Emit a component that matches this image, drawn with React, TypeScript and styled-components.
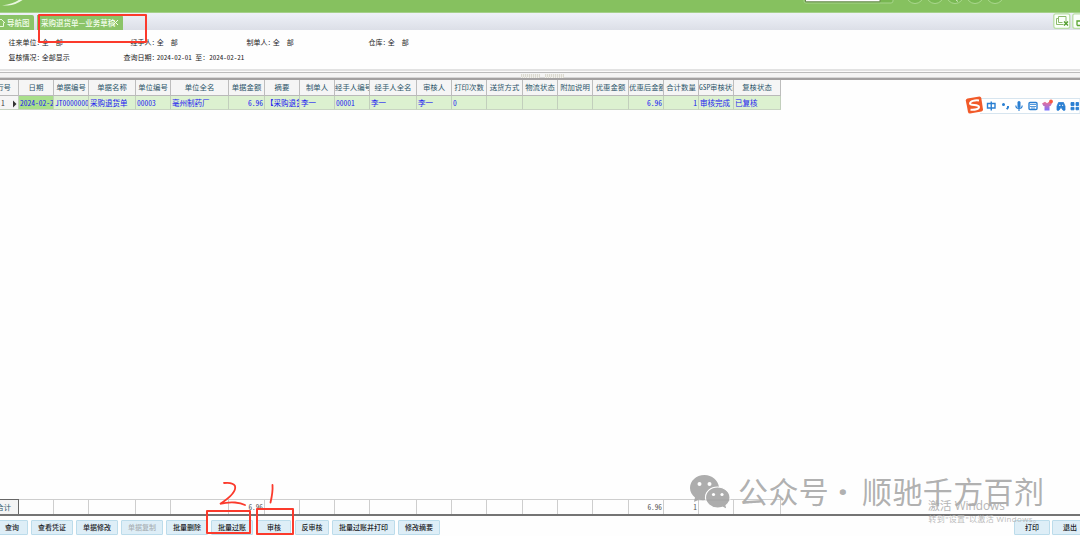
import React from "react";
import styled, { createGlobalStyle } from "styled-components";

const Global = createGlobalStyle`
  * { box-sizing: border-box; }
  body { margin: 0; background: #fff; overflow: hidden; }
`;

const Screen = styled.div`
  position: relative;
  width: 1080px;
  height: 536px;
  overflow: hidden;
  display: flex;
  flex-direction: column;
  background: #fefefe;
  font-family: "Noto Sans CJK SC", sans-serif;
  font-feature-settings: "hwid";
  font-size: 7px;
  color: #1c1c1c;
  white-space: pre;
`;

const TopBar = styled.header`
  flex: none;
  height: 13px;
  background: #86c15f;
  border-bottom: 1px solid #a5d08a;
  svg { display: block; }
`;

const TabStrip = styled.nav`
  flex: none;
  height: 17px;
  display: flex;
  align-items: flex-end;
  background: linear-gradient(#eef1f8, #dcdfe7);
`;

const Tab = styled.div<{ $w: number; $pad: number }>`
  width: ${(p) => p.$w}px;
  height: 15px;
  margin-right: 3px;
  padding-left: ${(p) => p.$pad}px;
  display: flex;
  align-items: center;
  background: #8bc468;
  border-radius: 0 2px 0 0;
  color: #f6fff0;
  font-size: 7.5px;
  line-height: 15px;
  overflow: hidden;
  font-weight: 500;
`;

const CloseIcon = styled.svg`
  flex: none;
  margin-left: -3px;
`;

const TabTools = styled.div`
  margin-left: auto;
  width: 27px;
  height: 16px;
  display: flex;
  align-self: flex-start;
  svg { flex: none; display: block; }
`;

const Filters = styled.section`
  flex: none;
  height: 39px;
  padding: 5px 0 0 8.5px;
  background: #fefefe;
`;

const FilterRow = styled.div`
  display: flex;
  height: 14.5px;
  line-height: 14.5px;
`;

const Field = styled.span<{ $w: number }>`
  width: ${(p) => p.$w}px;
  flex: none;
`;

const FieldLabel = styled.span`
  margin-right: -1.8px;
`;

const Splitter = styled.div`
  flex: none;
  height: 11px;
  border-top: 2px solid #e2e2e2;
  border-bottom: 2px solid #a3a1a1;
  background: linear-gradient(#fafafa 0 1px, #bcbcbc 1px 2px, #f5f5f5 2px 6px, #d6d6d6 6px);
  display: flex;
  justify-content: center;
  gap: 5px;
  padding: 3px 0 0 4px;
`;

const Grip = styled.i`
  width: 19px;
  height: 4px;
  background: repeating-linear-gradient(100deg, #dbd9d0 0 1px, #efefeb 1px 2px);
`;

const cols = [19, 35, 35, 47, 35, 58, 36, 35, 35, 35, 47, 35, 35, 36, 35, 35, 36, 35, 35, 35, 47];

const GridRow = styled.div<{ $h: number }>`
  flex: none;
  display: grid;
  grid-template-columns: ${cols.map((c) => c + "px").join(" ")};
  width: 781px;
  height: ${(p) => p.$h}px;
`;

const HeadCell = styled.div<{ $align: "center" | "flex-start" | "flex-end" }>`
  display: flex;
  justify-content: ${(p) => p.$align};
  padding-right: ${(p) => (p.$align === "flex-end" ? 7 : 0)}px;
  overflow: hidden;
  background: #f5f5f5;
  border-right: 1px solid #bdbdbd;
  border-bottom: 1px solid #b9b9b9;
  color: #2d566a;
  font-size: 7.4px;
  line-height: 14px;
  min-width: 0;
`;

const HeadText = styled.span`
  flex: none;
`;

const Cell = styled.div<{ $right?: boolean; $tone?: string; $ink?: string }>`
  overflow: hidden;
  min-width: 0;
  padding: 0 1px;
  text-align: ${(p) => (p.$right ? "right" : "left")};
  background: ${(p) => p.$tone || "#dcf1d0"};
  color: ${(p) => p.$ink || "#2020f0"};
  border-right: 1px solid #c2cfbc;
  border-bottom: 1px solid #c8d4c2;
  font-size: 7.5px;
  line-height: 13px;
  svg { margin-left: 7px; vertical-align: -1.5px; }
`;

const Body = styled.main`
  flex: 1;
`;

const TotalCell = styled.div<{ $label?: boolean }>`
  overflow: hidden;
  padding-right: ${(p) => (p.$label ? 7 : 1)}px;
  display: flex;
  justify-content: flex-end;
  background: ${(p) => (p.$label ? "#f4f4f4" : "#fefefe")};
  border: 0 solid ${(p) => (p.$label ? "#666" : "#cecece")};
  border-right-width: 1px;
  border-top-width: 1px;
  color: ${(p) => (p.$label ? "#2d566a" : "#555")};
  font-size: 7.3px;
  line-height: 15px;
`;

const Actions = styled.footer`
  flex: none;
  height: 22px;
  border-top: 2px solid #747474;
  display: flex;
  padding-top: 4px;
  margin: 0 -8px 0 -4px;
`;

const Button = styled.button<{ $w: number; $gap?: number; $off?: boolean }>`
  flex: none;
  width: ${(p) => p.$w}px;
  height: 15px;
  margin: 0 ${(p) => p.$gap ?? 3}px 0 0;
  padding: 0;
  border: 1px solid #bcdceb;
  border-radius: 1px;
  background: #deeef7;
  color: ${(p) => (p.$off ? "#a9b0b5" : "#1b2226")};
  font: 500 7px/13px "Noto Sans CJK SC", sans-serif;
  white-space: nowrap;
`;

const Spacer = styled.div`
  flex: 1;
`;

const Mark = styled.div<{ $x: number; $y: number; $w: number; $h: number }>`
  position: absolute;
  left: ${(p) => p.$x}px;
  top: ${(p) => p.$y}px;
  width: ${(p) => p.$w}px;
  height: ${(p) => p.$h}px;
  border: 2px solid #fb3a2c;
  border-radius: 1px;
`;

const Overlay = styled.svg<{ $x: number; $y: number }>`
  position: absolute;
  left: ${(p) => p.$x}px;
  top: ${(p) => p.$y}px;
`;

const Watermark = styled.div<{ $x: number; $y: number; $size: number; $ink: string; $track?: number; $weight?: number }>`
  position: absolute;
  left: ${(p) => p.$x}px;
  top: ${(p) => p.$y}px;
  font-size: ${(p) => p.$size}px;
  font-weight: ${(p) => p.$weight ?? 400};
  line-height: 1.2;
  letter-spacing: ${(p) => p.$track ?? 0}px;
  color: ${(p) => p.$ink};
  font-family: "Open Sans", "Noto Sans CJK SC", sans-serif;
  font-feature-settings: normal;
`;

const heads = ["行号", "日期", "单据编号", "单据名称", "单位编号", "单位全名", "单据金额", "摘要", "制单人", "经手人编号", "经手人全名", "审核人", "打印次数", "送货方式", "物流状态", "附加说明", "优惠金额", "优惠后金额", "合计数量", "GSP审核状态", "复核状态"];
const values = ["1", "2024-02-21", "JT0000000", "采购退货单", "00003", "亳州制药厂", "6.96", "【采购退货", "李一", "00001", "李一", "李一", "0", "", "", "", "", "6.96", "1", "审核完成", "已复核"];
const numeric = [6, 17, 18];
const wide = [9, 17, 19];

function Filter({ label, value, w }: { label: string; value: string; w: number }) {
  return (
    <Field $w={w}>
      <FieldLabel>{label}:</FieldLabel> {value}
    </Field>
  );
}

export default function App() {
  return (
    <Screen>
      <Global />
      <TopBar>
        <svg width="1080" height="12" viewBox="0 0 1080 12">
          <path d="M8 5.500Q16 5 24-1L20-1Q15 3.500 2 5.500Z" fill="#e8f6df" />
          <rect x="804" y="-8" width="89" height="11" rx="2" fill="#78b751" stroke="#a7d48c" />
          <path d="M805.5 0V1.8H880V0" fill="#fff" stroke="#69864f" strokeWidth="1" />
          {[915, 935, 955, 975, 995].map((x) => (
            <circle key={x} cx={x} cy="-5" r="8.5" fill="#79b953" stroke="#aad78e" />
          ))}
          <path d="M956 0l2 1.500" stroke="#d4edc4" />
        </svg>
      </TopBar>
      <TabStrip>
        <Tab $w={34} $pad={0}>
          <svg width="7" height="10" viewBox="0 0 7 10" fill="none" stroke="#f4ffec" strokeWidth=".9">
            <path d="M-3 5L1 1l4 4M3.5 4.5V8.5H-1" />
          </svg>
          导航图
        </Tab>
        <Tab $w={86} $pad={4}>
          采购退货单—业务草稿
          <CloseIcon width="7" height="9" viewBox="0 0 7 9" fill="none" stroke="#f4ffec">
            <path d="M1 2l5 5M6 2L1 7" />
          </CloseIcon>
        </Tab>
        <TabTools>
          <svg width="27" height="16" viewBox="0 0 27 16" fill="none">
            <rect x=".8" y=".8" width="16" height="14.5" rx="2" fill="#fafffa" stroke="#b9dea5" strokeWidth="1.3" />
            <rect x="19.8" y=".8" width="16" height="14.5" rx="2" fill="#fafffa" stroke="#b9dea5" strokeWidth="1.3" />
            <path d="M5.5 3.5h7.5v5.5M5.5 3.5v6h4M5.5 5.500H3.500v6h7" stroke="#8cba6c" />
            <path d="M11 8.500l4 4M15 8.500l-4 4" stroke="#4d9b28" strokeWidth="1.3" />
            <path d="M24 12.500V8H30M24 12.500h4" stroke="#5aa432" strokeWidth="1.3" />
          </svg>
        </TabTools>
      </TabStrip>
      <Filters>
        <FilterRow>
          <Filter w={122} label="往来单位" value="全  部" />
          <Filter w={116} label="经手人" value="全  部" />
          <Filter w={122} label="制单人" value="全  部" />
          <Filter w={80} label="仓库" value="全  部" />
        </FilterRow>
        <FilterRow>
          <Filter w={115} label="复核情况" value="全部显示" />
          <Filter w={140} label="查询日期" value="2024-02-01 至: 2024-02-21" />
        </FilterRow>
      </Filters>
      <Splitter><Grip /><Grip /></Splitter>
      <GridRow $h={16}>
        {heads.map((h, i) => (
          <HeadCell key={h} $align={i === 0 ? "flex-end" : wide.includes(i) ? "flex-start" : "center"}>
            <HeadText>{h}</HeadText>
          </HeadCell>
        ))}
      </GridRow>
      <GridRow $h={14}>
        {values.map((v, i) => (
          <Cell key={i} $right={numeric.includes(i)} $tone={i === 0 ? "#f5f5f5" : i === 1 ? "#a9df8b" : undefined} $ink={i === 0 ? "#444" : undefined}>
            {v}
            {i === 0 && (
              <svg width="5" height="8" viewBox="0 0 5 8">
                <path d="M1 0.5L4.5 4L1 7.5Z" fill="#333" />
              </svg>
            )}
          </Cell>
        ))}
      </GridRow>
      <Body />
      <GridRow $h={15}>
        {cols.map((_, i) => (
          <TotalCell key={i} $label={i === 0}>
            {i === 0 ? "合计" : i === 6 || i === 17 ? "6.96" : i === 18 ? "1" : ""}
          </TotalCell>
        ))}
      </GridRow>
      <Actions>
        <Button $w={32}>查询</Button>
        <Button $w={42}>查看凭证</Button>
        <Button $w={42}>单据修改</Button>
        <Button $w={42} $off>单据复制</Button>
        <Button $w={42}>批量删除</Button>
        <Button $w={42} $gap={4}>批量过账</Button>
        <Button $w={34} $gap={4}>审核</Button>
        <Button $w={34}>反审核</Button>
        <Button $w={63}>批量过账并打印</Button>
        <Button $w={42}>修改摘要</Button>
        <Spacer />
        <Button $w={36} $gap={2}>打印</Button>
        <Button $w={36} $gap={0}>退出</Button>
      </Actions>

      <Watermark $x={928} $y={498} $size={11.8} $ink="#b5b5b5">激活 Windows</Watermark>
      <Watermark $x={928.5} $y={513.5} $size={8} $ink="#bababa" $track={0.35}>转到"设置"以激活 Windows。</Watermark>
      <Watermark $x={738} $y={474} $size={30} $ink="#aaaaaaee" $track={0.4}>公众号</Watermark>
      <Watermark $x={838.5} $y={474} $size={30} $ink="#aaaaaaee" $weight={800}>·</Watermark>
      <Watermark $x={862} $y={474} $size={30} $ink="#aaaaaaee" $track={0.4}>顺驰千方百剂</Watermark>
      <Overlay $x={689} $y={474} width="42" height="36" viewBox="0 0 42 36">
        <path d="M15.500 1C7 1 1 7 1 14c0 4 2 7 5 9.500L5 28l5-2.500c2 .6 4 .8 6 .5C15 18 22 12 30 13 29 6 23 1 15.500 1Z" fill="#adadad" />
        <path d="M28.500 13C21.500 13 16.500 18 16.500 23.500S22 34 28.500 34c2 0 3.500-.2 5-.8L38 35.500 37 31.500c2.500-2 4-4.500 4-8C41 18 35.500 13 28.500 13Z" fill="#adadad" stroke="#fff" strokeWidth="1.100" />
        <g fill="#fff"><circle cx="10.500" cy="10" r="2" /><circle cx="20.500" cy="10" r="2" /><circle cx="24.500" cy="20.500" r="1.600" /><circle cx="33" cy="20.500" r="1.600" /></g>
        <path d="M5 26h36" stroke="#999" strokeWidth=".7" opacity=".55" />
      </Overlay>

      <Overlay $x={964} $y={95} width="116" height="20" viewBox="0 0 116 20" fill="none">
        <path d="M16 3.500H116V18.500H16" fill="#fff" stroke="#d7e5ef" />
        <path d="M3.500 3.500L15.500 1.500Q17 1.500 17.300 3L19 14.500Q19 16 17.500 16.500L6 18.500Q4.300 18.500 4 17L1.800 5.500Q1.800 4 3.500 3.500Z" fill="#f15a29" />
        <path d="M15 5.500C11 5 6 6 6 8.500c0 2.700 9 0 9 3.500 0 2.200-4 3-8.500 2.700" stroke="#fff" strokeWidth="2" />
        <g stroke="#2a7fd2" strokeWidth="1.400">
          <path d="M23.500 8.500h7.500v4.500h-7.500zM27.250 6.500v9" />
          <circle cx="39.500" cy="9.500" r=".8" fill="#2a7fd2" />
          <path d="M44 11v1.500l-1.200 1.700" strokeWidth="1.900" />
          <path d="M55 7.500v4" strokeWidth="3" strokeLinecap="round" />
          <path d="M51.800 10.500c0 4 6.400 4 6.400 0M55 13.500v2.500" strokeWidth="1.100" />
          <rect x="65" y="7.500" width="8" height="7" rx="1" />
          <path d="M66 9.500h6M66 11.500h6M67 13h4" strokeWidth=".8" />
          <path d="M93 15.200V11.200L94.500 7.500H99.500L101 11.200V15.200H99L97.500 12.800H96.500L95 15.200Z" fill="#2a7fd2" strokeWidth=".8" strokeLinejoin="round" />
          <path d="M95 10.300h1.500M98 10.300h1.200" stroke="#fff" strokeWidth="1" />
          <path d="M107 7.500h3v3h-3zM112 7.500h2.500v3H112zM107 12.300h3v2.500h-3zM112 12.300h2.500v2.500H112z" fill="#2a7fd2" strokeWidth=".9" />
        </g>
        <path d="M78 8.500l3-1.700 2 1.500 2-1.500 3 1.700-1.500 2.500-1 0v4.500h-5V11l-1 0Z" fill="url(#shirt)" />
        <circle cx="87" cy="6.500" r="1.900" fill="#f65b40" />
        <defs><linearGradient id="shirt" x1="0" y1="0" x2="0" y2="1"><stop stopColor="#ef7093" /><stop offset="1" stopColor="#7b73ff" /></linearGradient></defs>
      </Overlay>

      <Mark $x={38} $y={14} $w={109} $h={29} />
      <Mark $x={206} $y={510} $w={45} $h={24} />
      <Mark $x={256} $y={508} $w={38} $h={27} />
      <Overlay $x={215} $y={478} width="66" height="30" viewBox="0 0 66 30" fill="none" stroke="#fb3a2c" strokeWidth="1.800" strokeLinecap="round">
        <path d="M9 5Q18 4 20 8Q22 15 5 26Q12 24 20 24.500Q26 25 30 27" />
        <path d="M57.500 7Q58 14 55.500 24.500" />
      </Overlay>
    </Screen>
  );
}
